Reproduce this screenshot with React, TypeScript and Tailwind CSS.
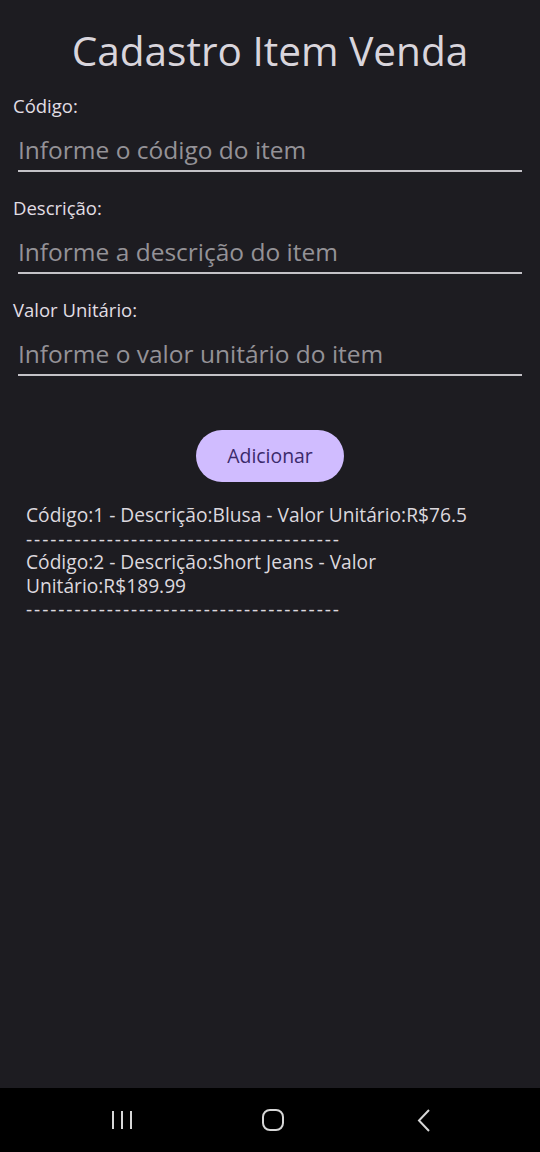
import { useState } from 'react';

type Item = { codigo: string; descricao: string; valor: string };

const dashes = '---------------------------------------';

const Field = ({ label, placeholder }: { label: string; placeholder: string }) => (
  <div className="flex flex-col">
    <label className="pl-[13px] text-[18.5px] leading-[24px] text-[#e1dee4]">{label}</label>
    <input
      placeholder={placeholder}
      className="mx-[18px] mt-[11px] h-[43px] border-b-2 border-[#c4c2c7] bg-transparent text-[24.5px] text-[#e1dee4] placeholder:text-[#949297] outline-none"
    />
  </div>
);

export default function App() {
  const [items] = useState<Item[]>([
    { codigo: '1', descricao: 'Blusa', valor: '76.5' },
    { codigo: '2', descricao: 'Short Jeans', valor: '189.99' },
  ]);

  return (
    <div
      className="flex h-[1152px] w-[540px] flex-col bg-[#1d1c21]"
      style={{ fontFamily: '"Open Sans", "Noto Sans", sans-serif' }}
    >
      <main className="flex flex-1 flex-col">
        <h1 className="pt-[23px] text-center text-[40.6px] leading-[56px] text-[#d9d5dc]">Cadastro Item Venda</h1>

        <div className="mt-[15px] flex flex-col gap-[24px]">
          <Field label="Código:" placeholder="Informe o código do item" />
          <Field label="Descrição:" placeholder="Informe a descrição do item" />
          <Field label="Valor Unitário:" placeholder="Informe o valor unitário do item" />
        </div>

        <div className="mt-[54px] flex justify-center">
          <button className="h-[52px] w-[148px] rounded-full bg-[#d0bcff] text-[19.4px] text-[#3b2a6b]">
            Adicionar
          </button>
        </div>

        <ul className="mt-[21px] flex flex-col pl-[26px] pr-[30px] text-[19.2px] leading-[23.5px] text-[#dcd8de]">
          {items.map((item) => (
            <li key={item.codigo} className="flex flex-col">
              <span>
                Código:{item.codigo} - Descrição:{item.descricao} - Valor Unitário:R${item.valor}
              </span>
              <span className="tracking-[1.9px]">{dashes}</span>
            </li>
          ))}
        </ul>
      </main>

      {/* Android navigation bar */}
      <nav className="flex h-[64px] items-center gap-[111px] bg-black pl-[102px] text-[#d6d6d6]">
        <div className="flex w-[40px] justify-center">
          <svg width="22" height="20" viewBox="0 0 22 20" fill="none" stroke="currentColor" strokeWidth="2">
            <path d="M2 1v18M11 1v18M20 1v18" />
          </svg>
        </div>
        <div className="flex w-[40px] justify-center">
          <svg width="22" height="22" viewBox="0 0 22 22" fill="none" stroke="currentColor" strokeWidth="2">
            <rect x="1" y="1" width="20" height="20" rx="7" />
          </svg>
        </div>
        <div className="flex w-[40px] justify-center">
          <svg width="14" height="23" viewBox="0 0 14 23" fill="none" stroke="currentColor" strokeWidth="2">
            <path d="M12 1L2 11.5l10 10.5" />
          </svg>
        </div>
      </nav>
    </div>
  );
}
